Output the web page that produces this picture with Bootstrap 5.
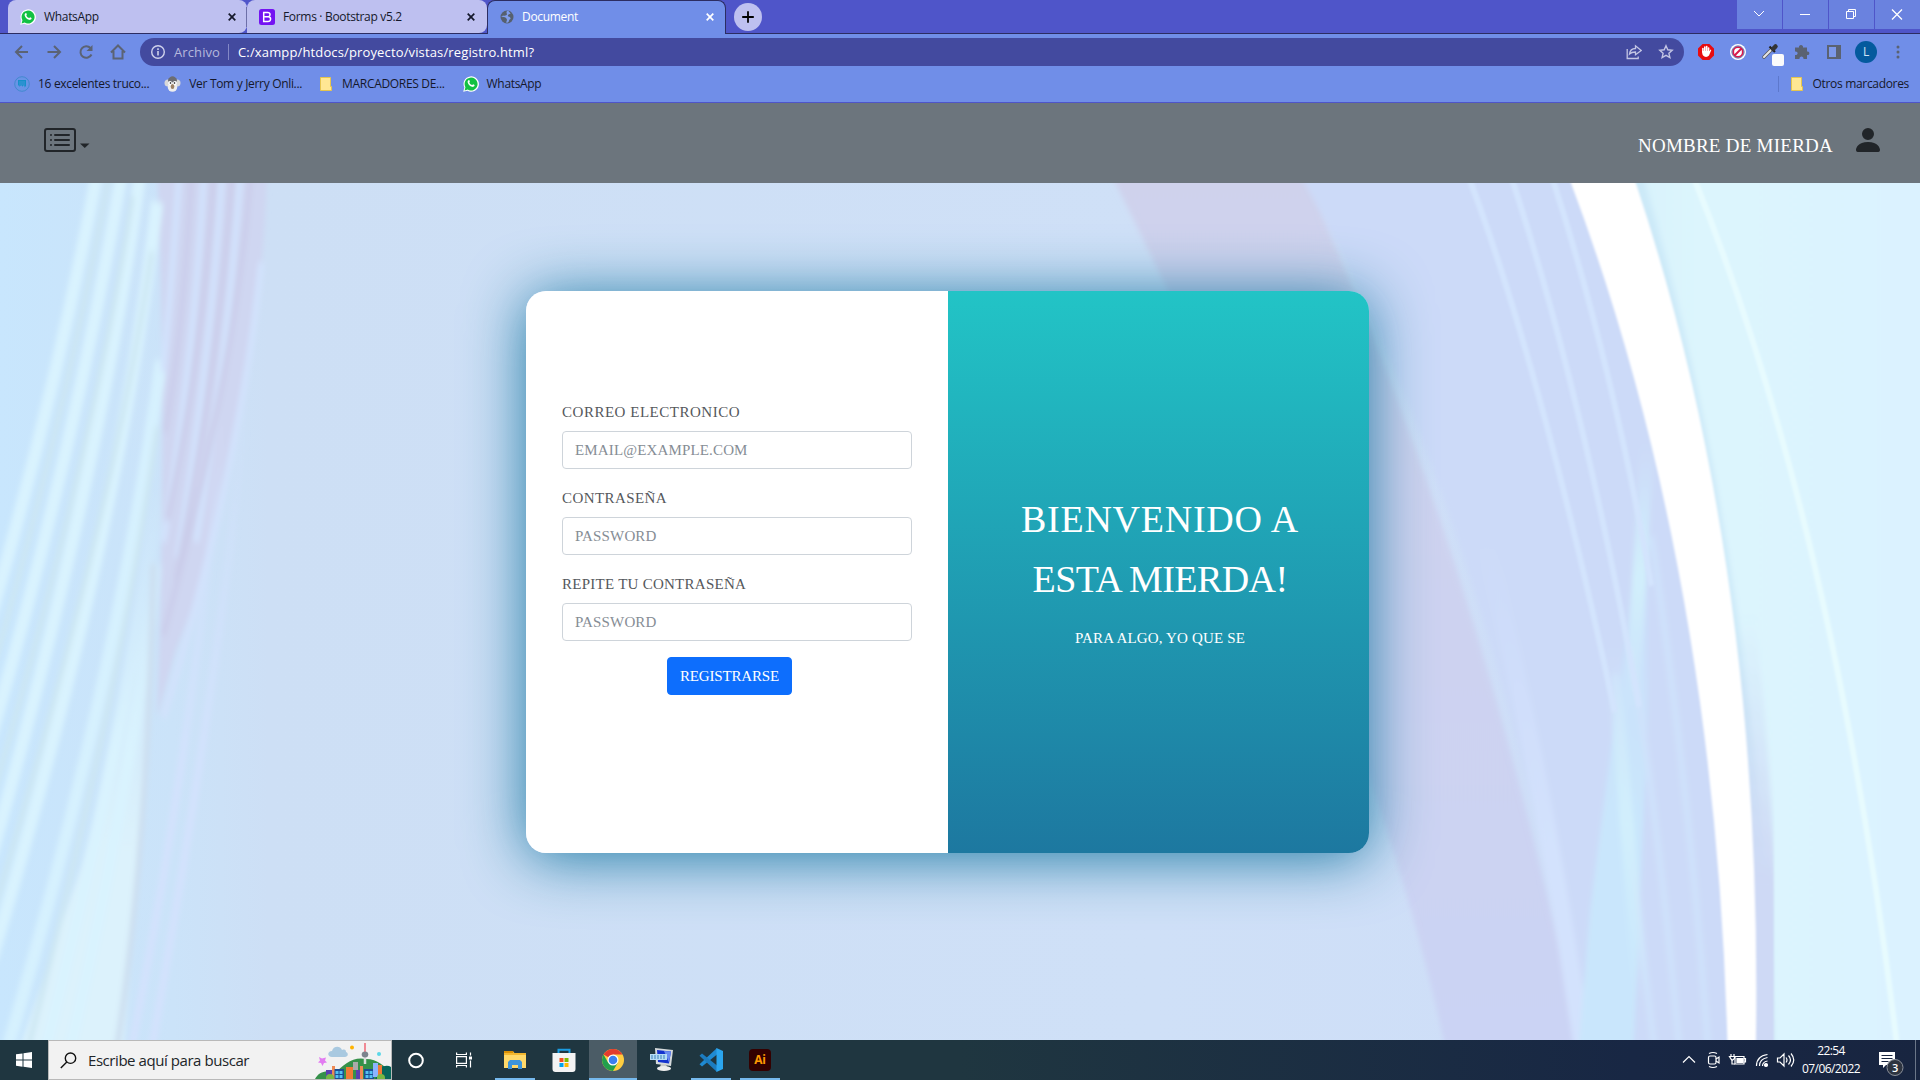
<!DOCTYPE html>
<html lang="es">
<head>
<meta charset="utf-8">
<title>Document</title>
<link href="https://cdn.jsdelivr.net/npm/bootstrap@5.3.0/dist/css/bootstrap.min.css" rel="stylesheet">
<style>
body{width:1920px;height:1080px;overflow:hidden;font-family:"Open Sans","Noto Sans",sans-serif;background:#cedff5}
svg{display:block;flex:none}
.ui{font-size:12px;line-height:16px;white-space:nowrap;color:#15182b;letter-spacing:-.32px}
.ui span,.serif span{display:inline-block}
.tabstrip{height:34px;background:#4f55c9;border-bottom:1px solid #2c2d62;padding-left:8px}
.btab{width:239px;height:33px;background:#bec0f0;padding-left:12px;padding-right:3px;border-radius:8px 8px 8px 0}
.btab.second{width:240px;padding-right:4px}
.btab.active{height:34px;width:239px;background:#708ee8;border:1px solid #2c2d62;border-bottom:0;border-radius:8px 8px 0 0;color:#fff;padding:0 7px 2px 12px}
.tabrule{width:1px;height:20px;background:#6d6fa8;margin-left:-1px;z-index:1}
.plus{width:28px;height:28px;border-radius:50%;background:#bec0f0;margin:3px 0 0 8px}
.winbtns{gap:1px}
.winbtn{width:45px;height:29px;background:#6a82df}
.toolbar{height:36px;background:#708ee8;padding:0 6px}
.tool{width:32px}
.omni{width:1544px;height:28px;border-radius:14px;background:#434a9f;margin-left:6px;color:#fff;padding:0 10px 0 9px;font-size:13px}
.omni svg+svg{margin-left:16px}
.scheme{margin-left:9px;color:#b6b9dd;letter-spacing:.1px}
.address{letter-spacing:.14px}
.rule{width:1px;height:16px;background:#8388c6;margin:0 9px 0 8px}
.marks{height:33px;background:#708ee8;border-bottom:1px solid #4f55c9;padding:0 11px 4px 14px}
.marks .rule{background:#5d78cc;margin:0 12px 0 auto}
.avatar{width:22px;height:22px;border-radius:50%;background:#045a9e;color:#cfe3f5;font-size:12px;line-height:22px}
.topnav{height:80px;background:#6c757d;padding:0 36px 6px 44px}
.caretmark{margin:10px 0 0 4px}
.brandname{font-size:19px;letter-spacing:.25px;margin:12px 19px 0 0}
.serif{font-family:"Liberation Serif",serif}
.scene{height:857px;padding:108px 0 0 526px}
.signup{width:843px;height:562px;border-radius:20px;box-shadow:0 5px 60px rgba(22,118,160,.95)}
.formside{width:422px;padding:108px 36px 0}
.form-label{color:#55585c;font-size:15px;line-height:24px;position:relative;top:.5px}
.form-control,.form-control::placeholder{font-size:15px;text-transform:uppercase;letter-spacing:.15px}
.form-control::placeholder{color:#868d95}
.form-control{border-radius:4px;height:38px;border-color:#ced4da}
.l1{letter-spacing:.52px}.l2{letter-spacing:.42px}.l3{letter-spacing:.26px}
.btn-go{width:125px;height:38px;margin-left:105px;padding:0;border-radius:4px;background:#0d6efd;font-size:15px;letter-spacing:-.17px}
.hero{background:linear-gradient(#22c4c6,#1d78a0);padding:198px 0 0 3px}
.hero h1{font-size:38px;line-height:60px;font-weight:400;margin-bottom:17px}
.h1a{letter-spacing:.74px}.h1b{letter-spacing:-.58px}
.sub{font-size:15px;line-height:24px;letter-spacing:.16px}
.taskbar{height:40px;background:linear-gradient(90deg,#1f3640 0,#1f3640 50%,#182744 85%,#182540)}
.tk{width:48px;height:40px}
.apps{gap:1px;margin-left:3px}
.run{position:relative}
.run::after{content:"";position:absolute;left:4px;right:4px;bottom:0;height:2px;background:#76b9ed}
.on{background:#4b5c66}.on::after{left:0;right:0}
.search{width:344px;height:40px;background:#f2f2f2;border:1px solid #b9b9b9;padding-left:11px}
.query{font-size:15px;letter-spacing:-.44px;margin-left:11px}
.clock{width:62px;margin-left:-1px;line-height:18px;letter-spacing:-.58px}
.notif{margin-left:6px}
</style>
<script src="https://cdn.jsdelivr.net/npm/bootstrap@5.3.0/dist/js/bootstrap.bundle.min.js"></script>
</head>
<body class="d-flex flex-column">
<svg width="0" height="0" class="position-absolute">
 <symbol id="wa" viewBox="0 0 16 16"><path fill="#fff" d="M.2 15.800 1.400 11.600A7.700 7.700 0 1 1 4.400 14.700z"/><path fill="#12c143" d="m1.600 14.400.85-3.100A6.500 6.500 0 1 1 4.700 13.600z"/><path fill="#fff" d="M5.600 4.200c.5-.3.8 0 1.200 1.300.2.500-.6.900-.5 1.200.6 1.200 1.500 2 2.700 2.400.4.100.8-1 1.200-.8 1.500.7 1.500.8 1.300 1.500-.4 1-1.600 1.300-2.500 1C7 10.200 5.300 8.600 4.700 6.500c-.3-1 .2-2 .9-2.300z"/></symbol>
 <symbol id="folder" viewBox="0 0 12 14"><path fill="#ffe793" stroke="#e6c54d" d="M.5.5h10v9h1v4H.5z"/></symbol>
 <symbol id="x" viewBox="0 0 8 8"><path d="m.7.7 6.600 6.600M7.300.7.7 7.300" stroke="currentColor" stroke-width="1.700"/></symbol>
</svg>

<header class="ui">
 <div class="tabstrip d-flex">
  <div class="btab d-flex align-items-center"><svg width="16" height="16"><use href="#wa"/></svg><span class="ms-2 me-auto">WhatsApp</span><svg width="8" height="8" class="me-2"><use href="#x"/></svg></div>
  <div class="tabrule align-self-center"></div>
  <div class="btab second d-flex align-items-center"><svg width="16" height="16"><rect width="16" height="16" rx="2.500" fill="#7413f2"/><path d="M4.700 3.500h4c3 0 3 3.600.8 4.200 3 .4 2.700 4.800-.6 4.800H4.700zM5.500 7.800h4" fill="none" stroke="#fff" stroke-width="1.500"/></svg><span class="ms-2 me-auto">Forms · Bootstrap v5.2</span><svg width="8" height="8" class="me-2"><use href="#x"/></svg></div>
  <div class="btab active d-flex align-items-center"><svg width="14" height="14" viewBox="0 0 14 14"><circle cx="7" cy="7" r="6.500" fill="#56606f"/><path d="M7.500.8C5 2.500 8 4 6.500 5S4 5.500 1.500 6c0 2 3 .5 4.500 2s1 2 0 4.500c2 .5 3-.5 3-2s2-1 1.500-2.500-2-1-2.500-2 1-2 2.500-2C10 2.500 9 1 7.500.8z" fill="#7f9dec"/></svg><span class="ms-2 me-auto">Document</span><svg width="8" height="8" class="me-1"><use href="#x"/></svg></div>
  <div class="plus"><svg width="28" height="28"><path d="M14 8.200v11.600M8.200 14h11.600" stroke="#000" stroke-width="1.800"/></svg></div>
  <div class="winbtns ms-auto d-flex">
   <div class="winbtn"><svg width="45" height="29" fill="none" stroke="#fff"><path d="m17 11 5 5 5-5"/></svg></div>
   <div class="winbtn"><svg width="45" height="29" fill="none" stroke="#fff"><path d="M17 14.500h10"/></svg></div>
   <div class="winbtn"><svg width="45" height="29" fill="none" stroke="#fff"><path d="M17.500 11.500h7v7h-7zM19.500 11.500v-2h7v7h-2"/></svg></div>
   <div class="winbtn"><svg width="45" height="29" fill="none" stroke="#fff" stroke-width="1.300"><path d="m17 9.500 10 10m0-10-10 10"/></svg></div>
  </div>
 </div>
 <div class="toolbar d-flex align-items-center">
  <svg class="tool" height="16" viewBox="0 0 32 16" fill="none" stroke="#5b6374" stroke-width="2"><path d="M22 8H10.500M16 2 10 8l6 6"/></svg>
  <svg class="tool" height="16" viewBox="0 0 32 16" fill="none" stroke="#5b6374" stroke-width="2"><path d="M9.500 8h12M16 2l6 6-6 6"/></svg>
  <svg class="tool" height="16" viewBox="0 0 32 16" fill="none" stroke="#5b6374" stroke-width="2"><path d="M21.500 10.500A5.800 5.800 0 1 1 20.500 4"/><path d="M22.500 1v6h-6z" fill="#5b6374" stroke="none"/></svg>
  <svg class="tool" height="16" viewBox="0 0 32 16" fill="none" stroke="#5b6374" stroke-width="2"><path d="M9 8.500 16 1.500l7 7M11.500 7v7.500h9V7"/></svg>
  <div class="omni d-flex align-items-center">
   <svg width="16" height="16" viewBox="0 0 16 16" fill="none" stroke="#cfd2ec" stroke-width="1.400"><circle cx="9" cy="8" r="6.300"/><path d="M9 7v4.500M9 4.300v1.600" stroke-width="1.600"/></svg>
   <span class="scheme">Archivo</span>
   <div class="rule"></div>
   <span class="address">C:/xampp/htdocs/proyecto/vistas/registro.html?</span>
   <svg class="ms-auto" width="16" height="16" fill="none" stroke="#c3c5e4" stroke-width="1.300"><path d="M1.200 5v9.500h11v-2M3.500 10c.5-4 3-5.500 6-5.500V1.800L15.200 6.500l-5.700 4.200V8c-3 0-4.500.5-6 2z"/></svg>
   <svg width="16" height="16" viewBox="0 0 16 16" fill="none" stroke="#c3c5e4" stroke-width="1.400"><path d="m8 1.800 1.800 4 4.400.5-3.300 3 1 4.300L8 11.400l-3.900 2.200 1-4.300-3.300-3 4.400-.5z"/></svg>
  </div>
  <div class="d-flex align-items-center ms-auto">
   <svg class="tool" height="24" viewBox="0 0 32 24"><path d="M12.600 4h6.800l4.600 4.600v6.800L19.400 20h-6.800L8 15.400V8.600z" fill="#e80c10"/><path d="M12.900 12V8.500M14.800 12V7M16.700 12V6.500M18.600 12V8" stroke="#fff" stroke-width="1.600" stroke-linecap="round"/><path d="M12.100 11h7.400l1-1.500.8.600-2.300 5.500c-1.500 1.700-4.500 1.700-5.900 0-.7-1-1-2.500-1-4.600z" fill="#fff"/></svg>
   <svg class="tool" height="24" viewBox="0 0 32 24"><circle cx="16" cy="12" r="8" fill="#fff"/><circle cx="16" cy="12" r="4.800" fill="#fff" stroke="#d9194c" stroke-width="1.800"/><circle cx="16" cy="12" r="6.100" fill="none" stroke="#33478f" stroke-width=".8"/><path d="m12.500 15.500 7-7" stroke="#d9194c" stroke-width="2"/></svg>
   <svg class="tool" height="28" viewBox="0 0 32 28"><path d="m10 19 7-7" stroke="#555" stroke-width="3.600" stroke-linecap="round"/><path d="m10 19 7-7" stroke="#e5e5e5" stroke-width="2.200" stroke-linecap="round"/><path d="m15.500 8.500 5.500 5.500" stroke="#222" stroke-width="2.200"/><path d="m19 11 2.500-2.500" stroke="#343434" stroke-width="4.500" stroke-linecap="round"/><rect x="18" y="16" width="12" height="12" rx="2" fill="#fbfbfb"/></svg>
   <svg class="tool" height="16" viewBox="0 0 32 16"><path fill="#5a6272" d="M9 3.500h4c-.8-3.500 4.800-3.500 4 0h4v4c3.200-.8 3.200 4.300 0 3.500V15h-3.500c.5-3.500-4.500-3.500-4 0H9v-4c3.500.5 3.500-4 0-3.500z"/></svg>
   <svg class="tool" height="16" viewBox="0 0 32 16"><path fill="#5a6272" d="M9 1h14v14H9z"/><path fill="#7c98ea" d="M11 3h7v10h-7z"/></svg>
   <div class="tool d-flex justify-content-center"><div class="avatar text-center">L</div></div>
   <svg class="tool" height="16" viewBox="0 0 32 16" fill="#5a6272"><circle cx="16" cy="3" r="1.500"/><circle cx="16" cy="8" r="1.500"/><circle cx="16" cy="13" r="1.500"/></svg>
  </div>
 </div>
 <div class="marks d-flex align-items-center">
  <svg width="16" height="16"><circle cx="8" cy="8" r="7.300" fill="#6894e6" stroke="#4389cf"/><path fill="#168fc9" d="M4 4h8v6l-1.500 1.500V9.500H9L8 11V9.500H6.500L5.500 11V9.500H4z"/><path d="M5 6h6M5 8h6" stroke="#5d9be3" stroke-width=".6"/></svg>
  <span class="ms-2">16 excelentes truco...</span>
  <svg style="margin-left:15px" width="17" height="16"><circle cx="4" cy="7" r="3.500" fill="#d8d8d8"/><circle cx="13" cy="7" r="3.500" fill="#d8d8d8"/><path d="M4 4c2-5 7-5 9 0l-1 7H5z" fill="#6c6d72"/><ellipse cx="8.500" cy="11" rx="4.800" ry="4.800" fill="#eee"/><circle cx="6" cy="7" r="2" fill="#fff"/><circle cx="11" cy="7" r="2" fill="#fff"/><circle cx="6.500" cy="7" r=".8"/><circle cx="10.500" cy="7" r=".8"/><ellipse cx="8.500" cy="10.500" rx="1.800" ry="2.500" fill="#9c8265"/></svg>
  <span style="margin-left:8px">Ver Tom y Jerry Onli...</span>
  <svg style="margin-left:18px" width="12" height="14"><use href="#folder"/></svg>
  <span style="margin-left:10px">MARCADORES DE...</span>
  <svg style="margin-left:18px" width="16" height="16"><use href="#wa"/></svg>
  <span class="ms-2">WhatsApp</span>
  <div class="rule"></div>
  <svg width="12" height="14"><use href="#folder"/></svg>
  <span style="margin-left:10px">Otros marcadores</span>
 </div>
</header>

<nav class="topnav serif d-flex align-items-center">
 <svg width="32" height="32" viewBox="0 0 16 16" fill="#212529"><path d="M14.500 3a.5.500 0 0 1 .5.500v9a.5.500 0 0 1-.5.500h-13a.5.500 0 0 1-.5-.500v-9a.5.500 0 0 1 .5-.500zm-13-1A1.500 1.500 0 0 0 0 3.500v9A1.500 1.500 0 0 0 1.500 14h13a1.500 1.500 0 0 0 1.500-1.500v-9A1.500 1.500 0 0 0 14.500 2z"/><path d="M5 8a.5.500 0 0 1 .5-.500h7a.5.500 0 0 1 0 1h-7A.5.500 0 0 1 5 8m0-2.500a.5.500 0 0 1 .5-.500h7a.5.500 0 0 1 0 1h-7a.5.500 0 0 1-.5-.500m0 5a.5.500 0 0 1 .5-.500h7a.5.500 0 0 1 0 1h-7a.5.500 0 0 1-.5-.500m-1-5a.5.500 0 1 1-1 0 .5.500 0 0 1 1 0M4 8a.5.500 0 1 1-1 0 .5.500 0 0 1 1 0m0 2.500a.5.500 0 1 1-1 0 .5.500 0 0 1 1 0"/></svg>
 <svg class="caretmark" width="10" height="5"><path d="M0 .5h9.500L4.750 5z" fill="#212529"/></svg>
 <span class="brandname text-white ms-auto">NOMBRE DE MIERDA</span>
 <svg width="32" height="32" viewBox="0 0 16 16" fill="#212529"><path d="M3 14s-1 0-1-1 1-4 6-4 6 3 6 4-1 1-1 1zm5-6a3 3 0 1 0 0-6 3 3 0 0 0 0 6"/></svg>
</nav>

<main class="scene serif position-relative">
 <svg class="position-absolute top-0 start-0" width="1920" height="857" viewBox="0 183 1920 857">
  <defs>
   <linearGradient id="base" x1="0" x2="1"><stop offset="0" stop-color="#c8e6fd"/><stop offset=".09" stop-color="#cbe3f9"/><stop offset=".14" stop-color="#cddff5"/><stop offset=".6" stop-color="#cfe0f7"/><stop offset="1" stop-color="#cddcf8"/></linearGradient>
   <linearGradient id="lav" x1="0" y1="0" x2="0" y2="1"><stop offset="0" stop-color="#cfd2ec"/><stop offset="1" stop-color="#cbd3f4"/></linearGradient>
   <linearGradient id="aq" x1="0" x2="1"><stop offset="0" stop-color="#d6f1fb"/><stop offset=".3" stop-color="#dcf5fd"/><stop offset="1" stop-color="#dbf2ff"/></linearGradient>
   <linearGradient id="fadeA" x1="0" y1="0" x2="0" y2="1"><stop offset="0" stop-color="#d9f3fe" stop-opacity="0"/><stop offset=".5" stop-color="#d9f3fe"/></linearGradient>
   <linearGradient id="fadeP" x1="0" y1="0" x2="0" y2="1"><stop offset="0" stop-color="#dcf2fc" stop-opacity="0"/><stop offset=".55" stop-color="#dcf2fc"/></linearGradient>
   <linearGradient id="fadeB" x1="0" y1="0" x2="0" y2="1"><stop offset="0" stop-color="#d3e2fd" stop-opacity="0"/><stop offset=".6" stop-color="#d3e2fd"/></linearGradient>
   <linearGradient id="fadeC" x1="0" y1="0" x2="0" y2="1"><stop offset="0" stop-color="#c9e6fc" stop-opacity="0"/><stop offset=".6" stop-color="#c9e6fc"/></linearGradient>
   <linearGradient id="fadeL" x1="0" y1="0" x2="0" y2="1"><stop offset="0" stop-color="#ced9f5" stop-opacity="0"/><stop offset=".6" stop-color="#ced9f5"/></linearGradient>
   <linearGradient id="glow" x1="0" y1="0" x2="0" y2="1"><stop offset="0" stop-color="#d1effc" stop-opacity="0"/><stop offset=".5" stop-color="#d1effc"/><stop offset="1" stop-color="#d1effc" stop-opacity="0"/></linearGradient>
   <filter id="b1" x="-20%" width="140%"><feGaussianBlur stdDeviation="7"/></filter>
   <filter id="b2" x="-20%" width="140%"><feGaussianBlur stdDeviation="2.500"/></filter>
  </defs>
  <rect y="183" width="1920" height="857" fill="url(#base)"/>
  <g transform="translate(0 180) scale(.4082 .5485)" fill="none">
   <g filter="url(#b1)">
    <path d="M385-20H655C640 300 570 600 430 860L385 980Q410 400 385-20z" fill="#cfd6f1"/>
    <path d="M370 750 200 1250 40 1600H300L350 1200z" fill="url(#fadeP)"/>
    <g stroke="#d9f3fe" stroke-width="30">
     <path d="M240-20Q140 380-20 790M300-20Q190 470-20 1010M345-20Q250 520-20 1230M385 40Q290 650-20 1420"/>
     <path d="M395 330Q290 900 20 1580" stroke="#d6f1fe"/>
    </g>
    <path d="M390 560Q310 1000 110 1590M385 700Q310 1150 170 1590" stroke="url(#fadeA)" stroke-width="30"/>
    <g stroke="#cde7f3" stroke-width="12"><path d="M270-20Q165 420-20 900M325 30Q230 490-20 1130M372 130Q280 600-10 1320M385 450Q290 950 70 1580"/></g>
    <g stroke="#d2e2fc" stroke-width="16"><path d="M440-20Q425 150 400 350M500-20Q480 300 400 660M545-20Q520 300 435 690M590-20Q560 300 480 660M640 150Q590 520 400 980"/></g>
    <g stroke="#cbcdea" stroke-width="12"><path d="M470-20Q450 270 405 460M525-20Q500 300 410 620M570-20Q540 320 430 730M615-20Q580 340 400 830"/></g>
    <path d="M550 400Q480 1000 320 1590M600 400Q560 800 370 1590" stroke="url(#fadeB)" stroke-width="18"/>
    <path d="M375 700Q365 1200 285 1590" stroke="#cddff0" stroke-width="14"/>
   </g>
  </g>
  <g transform="translate(1280 180) scale(.4082 .5485)" fill="none">
   <g filter="url(#b1)">
    <path d="M-420-20H50Q500 700 740 1600H410Q230 950-420-20z" fill="url(#lav)"/>
    <path d="M40-20H730Q1110 700 1120 1600H750Q500 580 40-20z" fill="#ccdaf8"/>
    <path d="M500 650Q650 1100 745 1600" stroke="url(#fadeB)" stroke-width="44"/>
    <path d="M900 520 760 1330 730 1600H865L900 1000z" fill="url(#fadeC)"/>
    <path d="M820 900Q870 1300 920 1600M860 850Q940 1250 980 1600M910 650Q1010 1150 1050 1600" stroke="#cfe2fb" stroke-width="16"/>
    <path d="M815 850 885 1500" stroke="url(#glow)" stroke-width="34"/>
    <path d="M900 480 860 980" stroke="url(#glow)" stroke-width="34"/>
   </g>
   <g filter="url(#b2)">
    <path d="M790-20H1600V1600H1170Q1200 800 790-20z" fill="url(#aq)"/>
    <path d="M850-60Q1160 700 1195 1600" stroke="#cce9f8" stroke-width="34" filter="url(#b1)"/>
    <path d="M1130 800Q1190 1250 1195 1600" stroke="url(#fadeL)" stroke-width="70" filter="url(#b1)"/>
    <path d="M700-20H860Q1190 700 1165 1600H1097Q1070 700 700-20z" fill="#fff"/>
    <path d="M455-20Q640 340 820 970M560-20Q740 380 880 960M660-20Q810 320 910 740" stroke="#d3e4fd" stroke-width="14"/>
    <path d="M1005-20Q1360 620 1515 1600" stroke="#e7fbfe" stroke-width="14"/>
   </g>
  </g>
 </svg>
 <section class="signup d-flex overflow-hidden position-relative">
  <form class="formside bg-white">
   <div class="mb-3"><label class="form-label mb-2 d-block"><span class="l1">CORREO ELECTRONICO</span></label><input class="form-control" placeholder="email@example.com"></div>
   <div class="mb-3"><label class="form-label mb-2 d-block"><span class="l2">CONTRASEÑA</span></label><input class="form-control" type="text" placeholder="Password"></div>
   <div class="mb-3"><label class="form-label mb-2 d-block"><span class="l3">REPITE TU CONTRASEÑA</span></label><input class="form-control" type="text" placeholder="Password"></div>
   <button type="button" class="btn btn-primary btn-go d-block">REGISTRARSE</button>
  </form>
  <div class="hero flex-fill text-center text-white">
   <h1><span class="h1a">BIENVENIDO A</span><br><span class="h1b">ESTA MIERDA!</span></h1>
   <p class="sub mb-0">PARA ALGO, YO QUE SE</p>
  </div>
 </section>
</main>

<footer class="taskbar ui d-flex text-white">
 <div class="tk d-flex align-items-center justify-content-center"><svg width="16" height="16" fill="#fff"><path d="M0 2.300 6.500 1.400V7.500H0zM7.500 1.200 16 0v7.500H7.500zM0 8.500h6.500v6.200L0 13.800zM7.500 8.500H16V16l-8.500-1.200z"/></svg></div>
 <div class="search d-flex align-items-center text-dark">
  <svg width="17" height="17" fill="none" stroke="#111" stroke-width="1.400"><circle cx="10.500" cy="6.200" r="5.200"/><path d="M6.800 10 .8 16"/></svg>
  <span class="query me-auto">Escribe aquí para buscar</span>
  <svg width="76" height="38" viewBox="0 0 76 38"><path d="M17 16c-5 0-5-6 0-6 1-5 8-6 10-1 3-1 4 0 4 2 3 1 2 5-1 5z" fill="#a9c9e0"/><path d="M0 38c4-8 12-9 20-6 8-8 18-17 31-14 12 0 18 8 25 12v8z" fill="#35914a"/><path d="M64 27q8-4 12-1v13H60z" fill="#07665b"/><path d="m4 16 3 1.500 4-1-1 3 2 2-3 .5-1.500 3-1.500-3-3-.5 2-2z" fill="#e27cf1"/><circle cx="37" cy="6.500" r="2" fill="#ffb300"/><circle cx="64" cy="13" r="2" fill="#5bd7e8"/><path d="M50 2v9" stroke="#e45" stroke-width="1.200"/><path d="M50 13v10" stroke="#ddd" stroke-width="2.500"/><ellipse cx="50" cy="13.500" rx="3.300" ry="3" fill="#7c848d"/><path d="M11 29h6v9h-6zM41 29h6v9h-6z" fill="#5a3fb0"/><path d="M17 25h3v13h-3zM45 25h3v13h-3z" fill="#ee8a54"/><path d="M19.500 28h9.500v10h-9.500zM49 28h10v10H49z" fill="#1b4e94"/><path d="M20.500 30h3v3h-3zm4 0h3v3h-3zm-4 4h3v3h-3zm4 0h3v3h-3zM50.500 30h3v3h-3zm4 0h3v3h-3zm-4 4h3v3h-3zm4 0h3v3h-3z" fill="#53c1f2"/><path d="M31 26h7v12h-7zM62 24h5v14h-5z" fill="#f07a35"/><path d="M38 21h5v8h-5z" fill="#aaa"/><path d="M58 22h5v14h-5z" fill="#8cb4ff"/><circle cx="15" cy="37" r="4" fill="#77b843"/><circle cx="66" cy="37" r="4" fill="#77b843"/></svg>
 </div>
 <div class="tk d-flex align-items-center justify-content-center"><svg width="18" height="18"><circle cx="9" cy="9.500" r="6.800" fill="none" stroke="#fff" stroke-width="2"/></svg></div>
 <div class="tk d-flex align-items-center justify-content-center"><svg width="18" height="16" fill="none" stroke="#fff" stroke-width="1.200"><path d="M1.600 4.600h9.800v6.800H1.600zM1.600.5v2h9.800v-2M1.600 15.500v-2h9.800v2M15.500.5v3M15.500 8.500v7"/><path d="M14 4.500h3v3h-3z" fill="#fff" stroke="none"/></svg></div>
 <div class="apps d-flex">
  <div class="tk run d-flex align-items-center justify-content-center"><svg width="22" height="20"><path d="M0 1h9l1.500 2H22v15H0z" fill="#f3b72f"/><path d="M0 5h22v13H0z" fill="#ffd96a"/><path d="M0 1h9v2H0z" fill="#d98f05"/><path d="M4 19v-7l2-2h10l2 2v7h-4v-4H8v4z" fill="#3c94db"/></svg></div>
  <div class="tk d-flex align-items-center justify-content-center"><svg width="24" height="24"><path d="M6.500 6V1.800h11V6" fill="none" stroke="#1b9de2" stroke-width="2"/><path d="M.5 5h23v16a3 3 0 0 1-3 3h-17a3 3 0 0 1-3-3z" fill="#f3f3f3"/><path d="M7.500 10h4v4h-4z" fill="#f25022"/><path d="M12.500 10h4v4h-4z" fill="#7fba00"/><path d="M7.500 15h4v4h-4z" fill="#00a4ef"/><path d="M12.500 15h4v4h-4z" fill="#ffb900"/></svg></div>
  <div class="tk run on d-flex align-items-center justify-content-center"><svg width="22" height="22" viewBox="0 0 22 22"><circle cx="11" cy="11" r="11" fill="#ffcd40"/><path d="M11 11 1.500 5.500A11 11 0 0 1 20.500 5.500H11z" fill="#e33b2e"/><path d="M1.500 5.500A11 11 0 0 0 11 22l4.800-8.200L11 11 6.200 13.700z" fill="#229f4c"/><circle cx="11" cy="11" r="5.500" fill="#fff"/><circle cx="11" cy="11" r="4.300" fill="#3c7ff0"/></svg></div>
  <div class="tk d-flex align-items-center justify-content-center"><svg width="24" height="24"><path d="M5 0l18 2-2 16-15-2z" fill="#d5dadc"/><path d="M7 2l14 1.500-2 12-11-1.500z" fill="#1432ce"/><path d="M14 3l7 .5-2 11z" fill="#6b8cf0"/><path d="M0 6h17v6H0z" fill="#b6dcf5"/><path d="M1 8h15M1 10h15" stroke="#3b82bd" stroke-dasharray="2 1"/><path d="M11 16h5l1 3H10z" fill="#ccc"/><ellipse cx="14" cy="20.500" rx="7" ry="2.500" fill="#eee"/></svg></div>
  <div class="tk run d-flex align-items-center justify-content-center"><svg width="24" height="24"><path d="M18 0v6.500L3 18.500.5 16.200z" fill="#1f8ad2"/><path d="M18 24v-6.500L3 5.500.5 7.800z" fill="#1c7cc0"/><path d="M17.500 0 24 3v18l-6.500 3z" fill="#2ba5ee"/></svg></div>
  <div class="tk run d-flex align-items-center justify-content-center"><svg width="22" height="22"><rect width="22" height="22" rx="4" fill="#330000"/><text x="11" y="15" text-anchor="middle" font-family="Open Sans" font-weight="700" font-size="12" fill="#ff9a00">Ai</text></svg></div>
 </div>
 <div class="d-flex align-items-center ms-auto">
  <svg width="124" height="24" viewBox="1677 0 124 24" fill="none" stroke="#fff" stroke-width="1.200">
   <path d="m1683 14.500 6-6 6 6"/>
   <rect x="1708.500" y="8" width="7.500" height="8" rx="1.500"/><path d="m1716 11 3-2v6l-3-2M1709 5.500q4-2 8 0M1709 18.500q4 2 8 0"/>
   <path d="M1735 8.500h9v7.500h-9zM1744 10.500h1.500v3.500h-1.500"/><path d="M1737 10.500h6v4h-6z" fill="#fff"/><path d="M1731 6v2.500m3-2.500v2.500M1729.500 8.500h5v2l-2.500 2zM1732 12v4h3"/>
   <path d="M1756.500 18q0-10 11-11.500M1759.500 18q0-7 8-8.500M1762.500 18q0-4 5-5"/><circle cx="1766" cy="17" r="1.500" fill="#fff"/>
   <path d="M1777.500 10h2.500l4-4v12l-4-4h-2.500zM1786 9.500q2 2.500 0 5M1788.500 7.500q4 4.500 0 9M1791 5.500q5.500 6.500 0 13"/>
  </svg>
  <div class="clock text-center"><div>22:54</div><div>07/06/2022</div></div>
  <svg class="notif" width="52" height="40"><path d="M11 12h16v13h-9l-3 3v-3h-4z" fill="#fff"/><path d="M13.500 15.500h11M13.500 18.500h11M13.500 21.500h7" stroke="#182540"/><circle cx="27" cy="27.500" r="8" fill="#2d3440" stroke="#8b909a"/><text x="27" y="31.500" text-anchor="middle" font-family="Open Sans" font-size="11" font-weight="600" fill="#fff">3</text><path d="M47.500 0v40" stroke="#6b7688"/></svg>
 </div>
</footer>
</body>
</html>
